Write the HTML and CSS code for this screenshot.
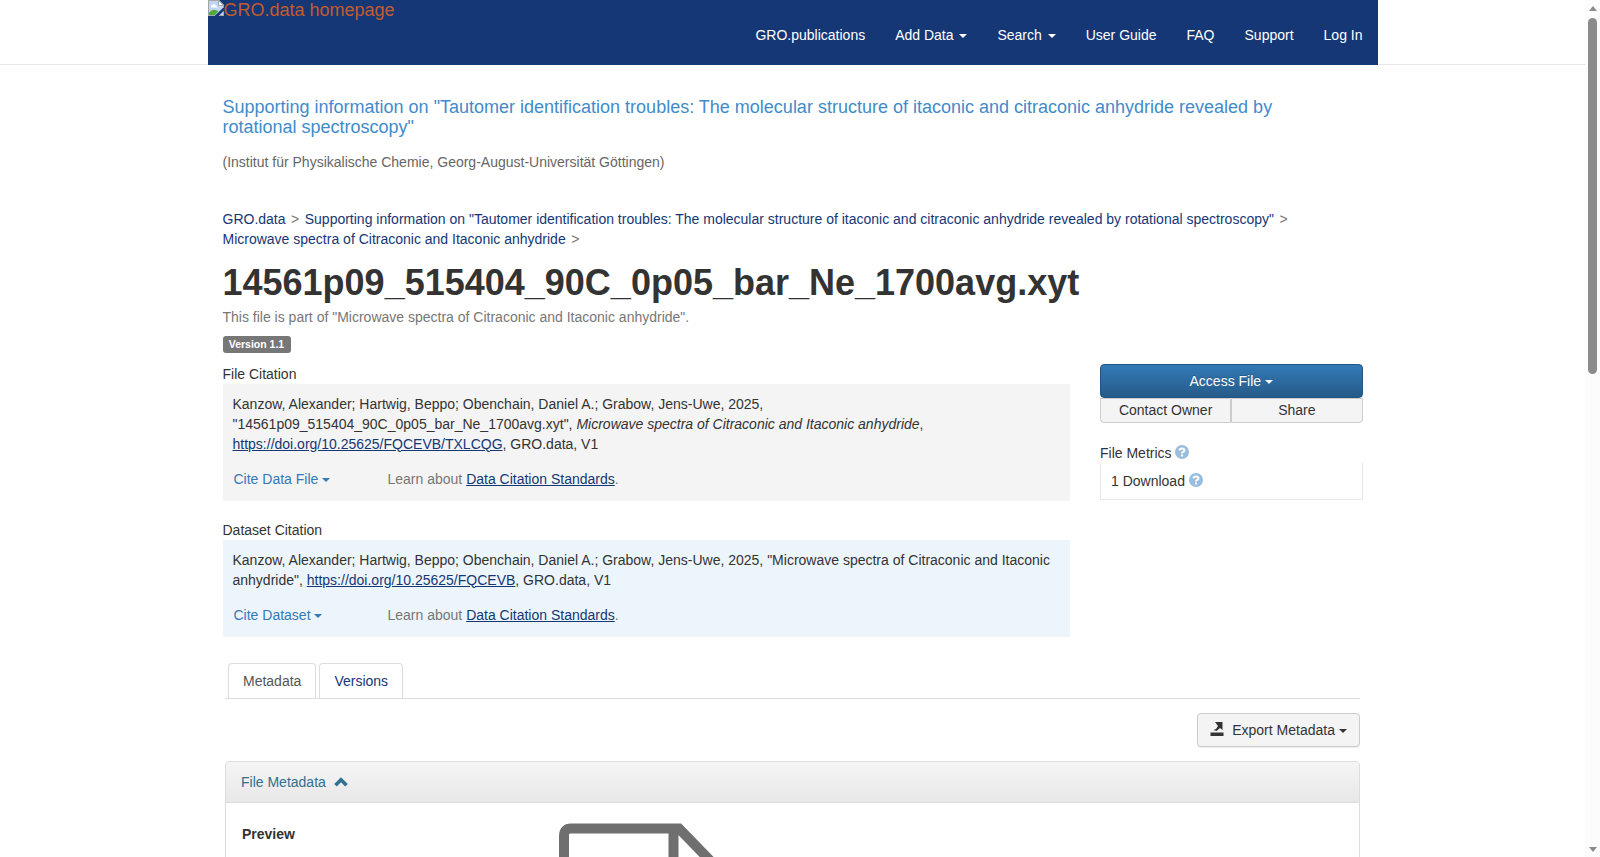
FILE: index.html
```html
<!DOCTYPE html>
<html lang="en">
<head>
  <meta charset="UTF-8" />
  <meta name="viewport" content="width=device-width, initial-scale=1.0" />
  <title>14561p09_515404_90C_0p05_bar_Ne_1700avg.xyt - GRO.data</title>
  <link rel="stylesheet" href="styles.css">
</head>
<body>
  <div class="page">
    <header class="navbar">
      <div class="navbar-inner">
        <a class="navbar-brand" href="#">
          <svg class="broken-img" width="16" height="16" viewBox="0 0 16 16">
            <path fill="#c3d5f5" d="M0 0h11l5 5v3l-8 8H0z"/>
            <path fill="#fff" d="M3 6.500a2 2 0 0 1 2-2 2 2 0 0 1 3 1.500q1.500 0 1.500 1.500H3z"/>
            <path fill="#55a83a" d="M1 15v-2.500Q4 9 7.500 10l3 1L7 15z"/>
            <path fill="#fff" d="M10.500 0 16 5.500h-5.500z"/>
            <path fill="#c3d5f5" d="M16 10.500V16h-5.500z"/>
            <path fill="#153775" d="M16 7v3L10 16H6.500z"/>
            <path fill="none" stroke="#a5a5a5" d="M6.500 15.500H.5V.5h10l5 5v2M10.500.5v5h5M15.500 11v4.500H11"/>
          </svg><span>GRO.data homepage</span>
        </a>
        <nav class="navbar-nav">
          <a href="#">GRO.publications</a>
          <a href="#">Add Data <b class="caret"></b></a>
          <a href="#">Search <b class="caret"></b></a>
          <a href="#">User Guide</a>
          <a href="#">FAQ</a>
          <a href="#">Support</a>
          <a href="#">Log In</a>
        </nav>
      </div>
    </header>

    <main class="container">
      <div class="dataverse-header">
        <a class="dataverse-name" href="#">Supporting information on "Tautomer identification troubles: The molecular structure of itaconic and citraconic anhydride revealed by rotational spectroscopy"</a>
        <p class="affiliation">(Institut für Physikalische Chemie, Georg-August-Universität Göttingen)</p>
      </div>

      <div class="breadcrumbs">
        <a href="#">GRO.data</a><span class="sep">&gt;</span><a href="#">Supporting information on "Tautomer identification troubles: The molecular structure of itaconic and citraconic anhydride revealed by rotational spectroscopy"</a><span class="sep">&gt;</span>
        <br><a href="#">Microwave spectra of Citraconic and Itaconic anhydride</a><span class="sep">&gt;</span>
      </div>

      <h1>14561p09_515404_90C_0p05_bar_Ne_1700avg.xyt</h1>
      <p class="subtitle">This file is part of "Microwave spectra of Citraconic and Itaconic anhydride".</p>
      <span class="label">Version 1.1</span>

      <div class="row">
        <div class="citations">
          <div class="citation-title">File Citation</div>
          <div class="citation">
            <div>Kanzow, Alexander; Hartwig, Beppo; Obenchain, Daniel A.; Grabow, Jens-Uwe, 2025,<br>"14561p09_515404_90C_0p05_bar_Ne_1700avg.xyt", <i>Microwave spectra of Citraconic and Itaconic anhydride</i>, <br><a href="#">https://doi.org/10.25625/FQCEVB/TXLCQG</a>, GRO.data, V1</div>
            <div class="citation-tools">
              <span class="cite-btn">Cite Data File <b class="caret"></b></span>
              <span>Learn about <a href="#">Data Citation Standards</a>.</span>
            </div>
          </div>

          <div class="citation-title">Dataset Citation</div>
          <div class="citation citation-dataset">
            <div>Kanzow, Alexander; Hartwig, Beppo; Obenchain, Daniel A.; Grabow, Jens-Uwe, 2025, "Microwave spectra of Citraconic and Itaconic<br>anhydride", <a href="#">https://doi.org/10.25625/FQCEVB</a>, GRO.data, V1</div>
            <div class="citation-tools">
              <span class="cite-btn">Cite Dataset <b class="caret"></b></span>
              <span>Learn about <a href="#">Data Citation Standards</a>.</span>
            </div>
          </div>
        </div>

        <aside class="actions">
          <button class="btn btn-primary">Access File <b class="caret"></b></button>
          <div class="btn-group">
            <button class="btn">Contact Owner</button>
            <button class="btn">Share</button>
          </div>
          <div class="metrics-title">File Metrics <svg class="help" width="14" height="14" viewBox="0 0 14 14"><circle cx="7" cy="7" r="7" fill="#99bddd"/><path fill="none" stroke="#fff" stroke-width="2" d="M4.500 5.300Q4.700 3.500 7 3.500t2.500 1.800Q9.500 6.500 8 7q-1 .4-1 1.500"/><path fill="#fff" d="M6 9.500h2v2H6z"/></svg></div>
          <div class="metrics">1 Download <svg class="help" width="14" height="14" viewBox="0 0 14 14"><circle cx="7" cy="7" r="7" fill="#99bddd"/><path fill="none" stroke="#fff" stroke-width="2" d="M4.500 5.300Q4.700 3.500 7 3.500t2.500 1.800Q9.500 6.500 8 7q-1 .4-1 1.500"/><path fill="#fff" d="M6 9.500h2v2H6z"/></svg></div>
        </aside>
      </div>

      <div class="tab-view">
        <div class="tabs">
          <a class="tab active" href="#">Metadata</a>
          <a class="tab" href="#">Versions</a>
        </div>

        <div class="toolbar">
          <button class="btn btn-export"><svg width="14" height="14" viewBox="0 0 14 14"><path fill="#333" d="M5 0h7.500v8L10 6 6.500 9 3.500 8l2.500-1 2-3zM.5 10.500h13V14H.5z"/></svg>Export Metadata <b class="caret"></b></button>
        </div>

        <section class="panel">
          <div class="panel-heading">File Metadata <svg width="14" height="10" viewBox="0 0 14 10"><path fill="none" stroke="#31708f" stroke-width="3.600" d="M1.500 8.200 7 2.700l5.500 5.500"/></svg></div>
          <div class="panel-body">
            <strong>Preview</strong>
            <svg class="file-icon" width="176" height="200" viewBox="0 0 176 200"><path fill="none" stroke="#6f6f6f" stroke-width="10" d="M5 195V13Q5 5.500 12 5.500h108L171 58v137zM114.500 5v58H171"/></svg>
          </div>
        </section>
      </div>
    </main>
  </div>

  <div class="scrollbar">
    <i class="arrow-up"></i>
    <i class="thumb"></i>
    <i class="arrow-down"></i>
  </div>
</body>
</html>
```
FILE: styles.css
```css
*{box-sizing:border-box;}
body{
  margin:0;height:100vh;overflow:hidden;
  display:flex;
  font-family:"Liberation Sans",Arial,sans-serif;
  font-size:14px;line-height:20px;color:#333;background:#fff;
}
a{color:#153775;text-decoration:none;}
p,h1{margin:0;}
.page{flex:1;height:100vh;overflow:hidden;}

/* Top navigation */
.navbar{height:65px;border-bottom:1px solid #e7e7e7;}
.navbar-inner{
  width:1170px;height:65px;margin:0 auto;
  display:flex;justify-content:space-between;
  background:#153775;
}
.navbar-brand{display:flex;height:20px;font-size:18px;color:#c35b2d;}
.navbar-nav{display:flex;padding-top:25px;}
.navbar-nav a{color:#fff;padding:0 15px;}
.caret{
  display:inline-block;vertical-align:middle;
  border-top:4px solid;
  border-left:4px solid transparent;border-right:4px solid transparent;
}
.navbar-nav .caret{margin-left:2px;}

.container{width:1140px;margin:0 auto;}
.dataverse-header{padding:33px 0 37px;}
.dataverse-name{display:block;max-width:1080px;font-size:18px;line-height:19.8px;color:#428bca;}
.affiliation{margin-top:14px;color:#666;}
.sep{color:#777;margin:0 5.5px;}
h1{font-size:36px;line-height:40px;font-weight:bold;margin-top:14px;}
.subtitle{margin-top:4px;color:#777;}
.label{
  display:block;width:68px;height:17px;margin-top:9px;
  background:#777;color:#fff;border-radius:3px;
  font-size:10.5px;line-height:16px;font-weight:bold;text-align:center;
}

/* Citations and file actions */
.row{display:flex;justify-content:space-between;margin-top:11px;}
.citations{width:847.5px;}
.citation{
  height:116px;padding:10px;margin-bottom:20px;
  background:#f4f4f4;box-shadow:0 1px 1px rgba(0,0,0,.04);
}
.citation a{text-decoration:underline;}
.citation-dataset{height:96px;margin-bottom:0;background:#ecf5fb;}
.citation-tools{display:flex;margin-top:15px;padding-left:1px;color:#777;}
.cite-btn{width:154px;color:#337ab7;}
.actions{width:262.5px;}
.btn{
  font:inherit;color:#333;padding:0;
  background:#f4f4f4;border:1px solid #ccc;border-radius:4px;
}
.btn-primary{
  display:block;width:100%;height:34px;color:#fff;
  background:linear-gradient(#337ab7,#265a88);border-color:#245580;
  text-shadow:0 -1px 0 rgba(0,0,0,.2);
}
.btn-group{display:flex;}
.btn-group .btn{
  flex:1;height:25px;line-height:22px;
  border-radius:0 0 4px 0;
}
.btn-group .btn:first-child{border-radius:0 0 0 4px;}
.metrics-title{margin-top:20px;}
.help{vertical-align:-1px;}
.metrics{
  height:37px;padding:8px 10px;
  border:1px solid #e7e7e7;border-top:0;
}

/* Tabs */
.tab-view{margin:27px 2.5px 0;}
.tabs{display:flex;gap:3px;padding-left:3px;border-bottom:1px solid #ddd;}
.tab{
  height:35px;padding:7px 14px;
  border:1px solid #ddd;border-bottom:0;border-radius:4px 4px 0 0;
}
.tab.active{color:#555;}
.toolbar{display:flex;justify-content:flex-end;padding:14px 0;}
.btn-export{
  width:163px;height:34px;
  box-shadow:0 1px 1px rgba(0,0,0,.08);
}
.btn-export svg{margin-right:8px;vertical-align:-1px;}
.panel{border:1px solid #ddd;border-radius:4px 4px 0 0;}
.panel-heading{
  height:41px;padding:10px 15px;color:#31708f;
  background:linear-gradient(#f5f5f5,#e8e8e8);
  border-bottom:1px solid #ddd;border-radius:3px 3px 0 0;
}
.panel-heading svg{margin-left:4px;}
.panel-body{display:flex;padding:20px 16px;}
.panel-body strong{width:317px;padding-top:1px;}

/* Window scrollbar */
.scrollbar{
  width:15px;height:100vh;padding:6px 0 5px;
  display:flex;flex-direction:column;align-items:center;
  background:#fcfcfc;
}
.arrow-up,.arrow-down{border:4.5px solid transparent;}
.arrow-up{border-top:0;border-bottom:5px solid #8b8b8b;}
.arrow-down{border-bottom:0;border-top:5px solid #8b8b8b;margin-top:auto;}
.thumb{width:9px;height:356px;margin-top:7px;border-radius:5px;background:#8b8b8b;}
```
